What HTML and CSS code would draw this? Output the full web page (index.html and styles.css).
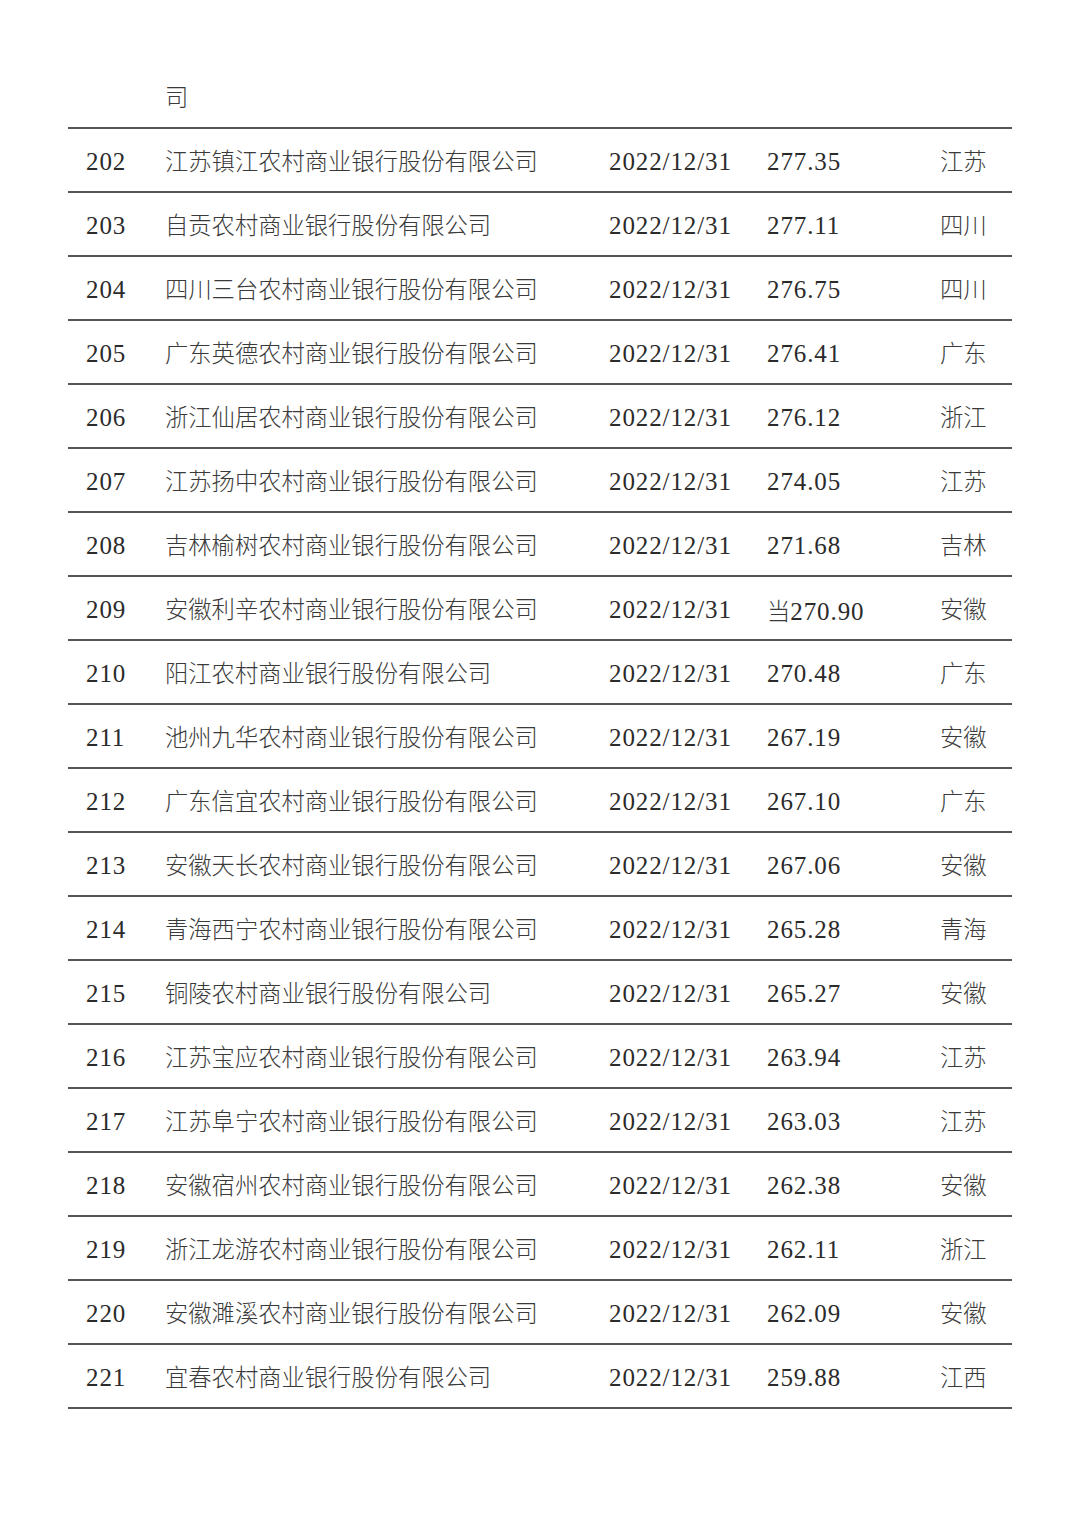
FILE: index.html
```html
<!DOCTYPE html>
<html lang="zh">
<head>
<meta charset="utf-8">
<link rel="stylesheet" href="styles.css">
</head>
<body>
<table class="list">
<colgroup><col class="c-rank"><col class="c-name"><col class="c-date"><col class="c-val"><col class="c-prov"></colgroup>
<tr class="cont"><td></td><td class="zh">司</td><td></td><td></td><td></td></tr>
<tr><td class="num">202</td><td class="zh">江苏镇江农村商业银行股份有限公司</td><td class="num">2022/12/31</td><td class="num">277.35</td><td class="zh">江苏</td></tr>
<tr><td class="num">203</td><td class="zh">自贡农村商业银行股份有限公司</td><td class="num">2022/12/31</td><td class="num">277.11</td><td class="zh">四川</td></tr>
<tr><td class="num">204</td><td class="zh">四川三台农村商业银行股份有限公司</td><td class="num">2022/12/31</td><td class="num">276.75</td><td class="zh">四川</td></tr>
<tr><td class="num">205</td><td class="zh">广东英德农村商业银行股份有限公司</td><td class="num">2022/12/31</td><td class="num">276.41</td><td class="zh">广东</td></tr>
<tr><td class="num">206</td><td class="zh">浙江仙居农村商业银行股份有限公司</td><td class="num">2022/12/31</td><td class="num">276.12</td><td class="zh">浙江</td></tr>
<tr><td class="num">207</td><td class="zh">江苏扬中农村商业银行股份有限公司</td><td class="num">2022/12/31</td><td class="num">274.05</td><td class="zh">江苏</td></tr>
<tr><td class="num">208</td><td class="zh">吉林榆树农村商业银行股份有限公司</td><td class="num">2022/12/31</td><td class="num">271.68</td><td class="zh">吉林</td></tr>
<tr><td class="num">209</td><td class="zh">安徽利辛农村商业银行股份有限公司</td><td class="num">2022/12/31</td><td class="num"><span class="zhi">当</span>270.90</td><td class="zh">安徽</td></tr>
<tr><td class="num">210</td><td class="zh">阳江农村商业银行股份有限公司</td><td class="num">2022/12/31</td><td class="num">270.48</td><td class="zh">广东</td></tr>
<tr><td class="num">211</td><td class="zh">池州九华农村商业银行股份有限公司</td><td class="num">2022/12/31</td><td class="num">267.19</td><td class="zh">安徽</td></tr>
<tr><td class="num">212</td><td class="zh">广东信宜农村商业银行股份有限公司</td><td class="num">2022/12/31</td><td class="num">267.10</td><td class="zh">广东</td></tr>
<tr><td class="num">213</td><td class="zh">安徽天长农村商业银行股份有限公司</td><td class="num">2022/12/31</td><td class="num">267.06</td><td class="zh">安徽</td></tr>
<tr><td class="num">214</td><td class="zh">青海西宁农村商业银行股份有限公司</td><td class="num">2022/12/31</td><td class="num">265.28</td><td class="zh">青海</td></tr>
<tr><td class="num">215</td><td class="zh">铜陵农村商业银行股份有限公司</td><td class="num">2022/12/31</td><td class="num">265.27</td><td class="zh">安徽</td></tr>
<tr><td class="num">216</td><td class="zh">江苏宝应农村商业银行股份有限公司</td><td class="num">2022/12/31</td><td class="num">263.94</td><td class="zh">江苏</td></tr>
<tr><td class="num">217</td><td class="zh">江苏阜宁农村商业银行股份有限公司</td><td class="num">2022/12/31</td><td class="num">263.03</td><td class="zh">江苏</td></tr>
<tr><td class="num">218</td><td class="zh">安徽宿州农村商业银行股份有限公司</td><td class="num">2022/12/31</td><td class="num">262.38</td><td class="zh">安徽</td></tr>
<tr><td class="num">219</td><td class="zh">浙江龙游农村商业银行股份有限公司</td><td class="num">2022/12/31</td><td class="num">262.11</td><td class="zh">浙江</td></tr>
<tr><td class="num">220</td><td class="zh">安徽濉溪农村商业银行股份有限公司</td><td class="num">2022/12/31</td><td class="num">262.09</td><td class="zh">安徽</td></tr>
<tr><td class="num">221</td><td class="zh">宜春农村商业银行股份有限公司</td><td class="num">2022/12/31</td><td class="num">259.88</td><td class="zh">江西</td></tr>
</table>
</body>
</html>
```

FILE: styles.css
```css
html, body {
  margin: 0;
  padding: 0;
  background: #ffffff;
}
.list {
  margin-left: 68px;
  width: 944px;
  border-collapse: collapse;
  table-layout: fixed;
  color: #333;
}
.c-rank { width: 97px; }
.c-name { width: 444px; }
.c-date { width: 158px; }
.c-val { width: 173px; }
.c-prov { width: 72px; }
.list td {
  height: 62px;
  padding: 0;
  border-bottom: 2px solid #555;
  vertical-align: middle;
  white-space: nowrap;
}
.list td:first-child { padding-left: 18px; }
.list tr.cont td {
  height: 128px;
  vertical-align: bottom;
  padding-bottom: 14px;
  box-sizing: border-box;
}
.list td.num {
  font-family: "Liberation Serif", "DejaVu Serif", serif;
  font-size: 25px;
  letter-spacing: 0.9px;
  color: #2b2b2b;
  height: 58px;
  padding-top: 4px;
}
.zh, .zhi {
  font-family: "Noto Sans CJK SC", sans-serif;
  font-weight: 300;
  font-size: 23.3px;
  letter-spacing: 0;
  color: #3a3a3a;
}
```
